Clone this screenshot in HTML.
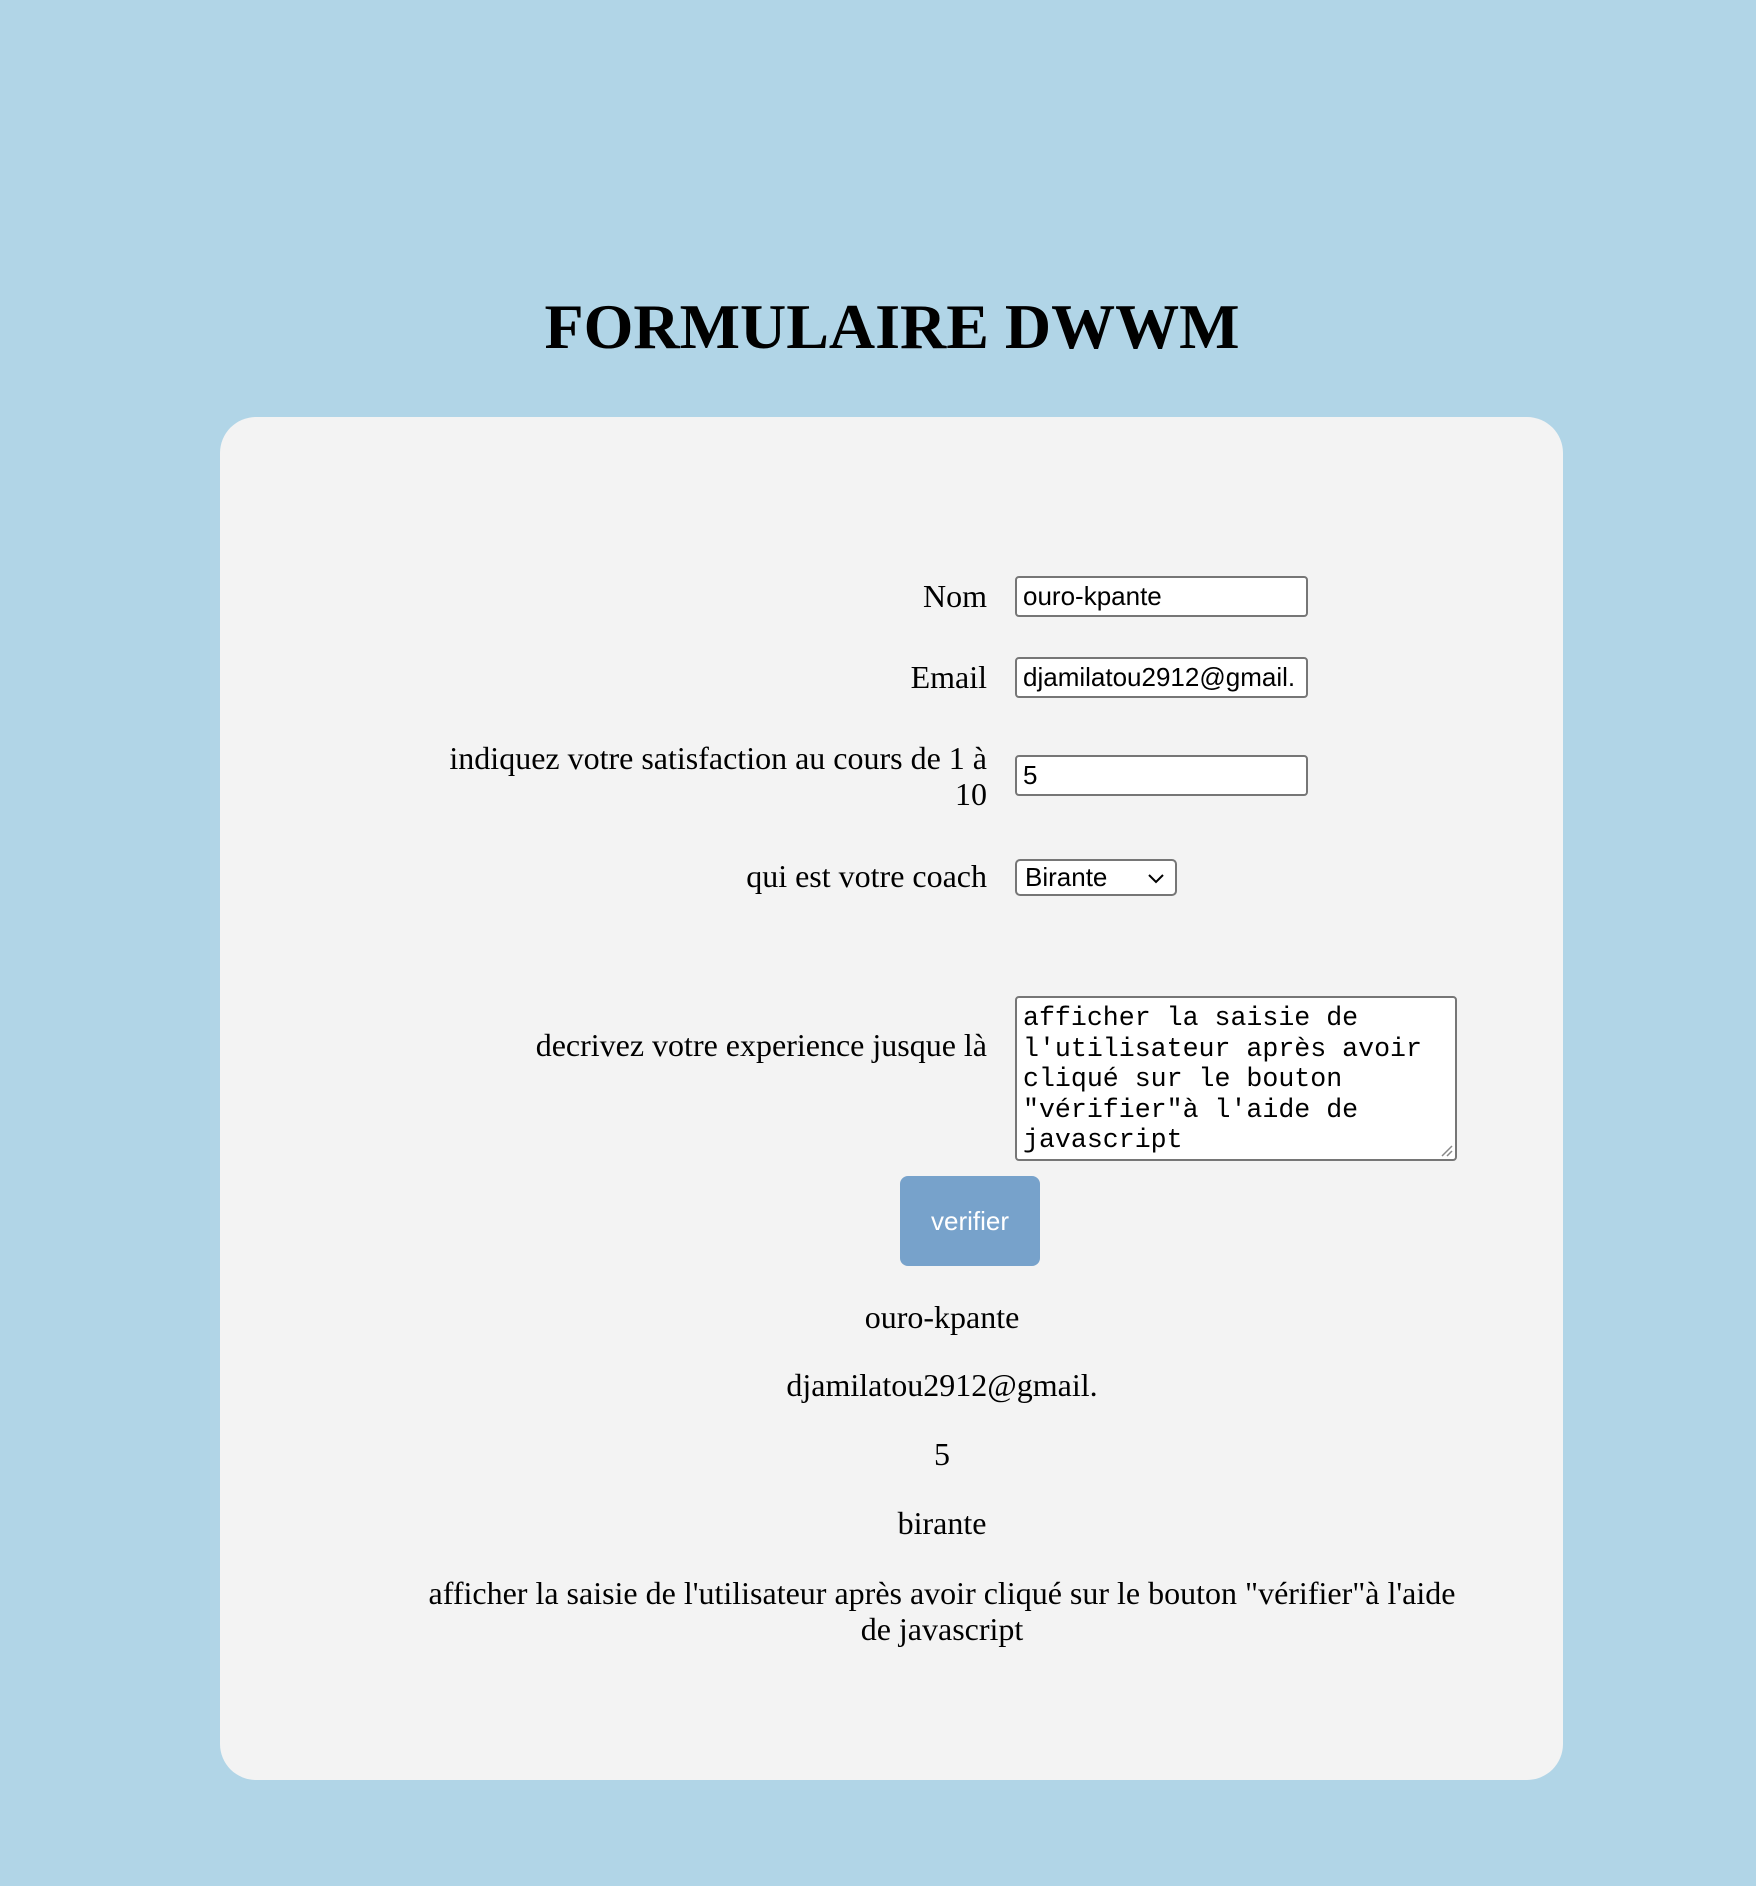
<!DOCTYPE html>
<html><head><meta charset="utf-8"><style>
html,body{margin:0;padding:0;}
body{width:1756px;height:1886px;background:#b1d5e7;position:relative;overflow:hidden;font-family:"Liberation Serif",serif;color:#000;}
.abs{position:absolute;}
h1{position:absolute;left:0;width:1784px;top:287px;margin:0;text-align:center;font:bold 64px/80px "Liberation Serif",serif;}
.card{position:absolute;left:220px;top:417px;width:1343px;height:1363px;background:#f3f3f3;border-radius:36px;}
.lbl{position:absolute;right:769px;font-size:32px;line-height:36px;text-align:right;white-space:nowrap;}
.inp{position:absolute;left:1015px;height:37px;background:#fff;border:2px solid #767676;border-radius:4px;font:26px/37px "Liberation Sans",sans-serif;padding-left:6px;box-sizing:content-box;white-space:nowrap;overflow:hidden;width:283px;}
.res{position:absolute;left:400px;width:1084px;text-align:center;font-size:32px;line-height:36px;}
</style></head><body>
<h1>FORMULAIRE DWWM</h1>
<div class="card"></div>

<div class="lbl" style="top:578px">Nom</div>
<div class="inp" style="top:576px">ouro-kpante</div>

<div class="lbl" style="top:659px">Email</div>
<div class="inp" style="top:657px">djamilatou2912@gmail.</div>

<div class="lbl" style="top:740px">indiquez votre satisfaction au cours de 1 à<br>10</div>
<div class="inp" style="top:755px">5</div>

<div class="lbl" style="top:858px">qui est votre coach</div>
<div class="abs" style="left:1015px;top:859px;background:#fff;border:2px solid #767676;border-radius:5px;font:26px/33px 'Liberation Sans',sans-serif;padding-left:8px;box-sizing:border-box;width:162px;height:37px;line-height:33px;">Birante
<svg style="position:absolute;right:10px;top:12px" width="18" height="11" viewBox="0 0 18 11"><path d="M2 2 L9 9 L16 2" fill="none" stroke="#000" stroke-width="2"/></svg></div>

<div class="lbl" style="top:1027px">decrivez votre experience jusque là</div>
<div class="abs" style="left:1015px;top:996px;width:442px;height:165px;background:#fff;border:2px solid #767676;border-radius:4px;box-sizing:border-box;padding:5px 6px 3px;font:26.6px/30.6px 'Liberation Mono',monospace;white-space:pre;">afficher la saisie de
l'utilisateur après avoir
cliqué sur le bouton
"vérifier"à l'aide de
javascript<svg style="position:absolute;right:2px;bottom:2px" width="14" height="14" viewBox="0 0 14 14"><path d="M13 3 L3 13 M13 8 L8 13" stroke="#888" stroke-width="1.5"/></svg></div>

<div class="abs" style="left:900px;top:1176px;width:140px;height:90px;background:#77a2cb;border-radius:8px;color:#fff;font:26px/90px 'Liberation Sans',sans-serif;text-align:center;">verifier</div>

<div class="res" style="top:1299px">ouro-kpante</div>
<div class="res" style="top:1367px">djamilatou2912@gmail.</div>
<div class="res" style="top:1436px">5</div>
<div class="res" style="top:1505px">birante</div>
<div class="res" style="top:1575px">afficher la saisie de l'utilisateur après avoir cliqué sur le bouton "vérifier"à l'aide<br>de javascript</div>
</body></html>
